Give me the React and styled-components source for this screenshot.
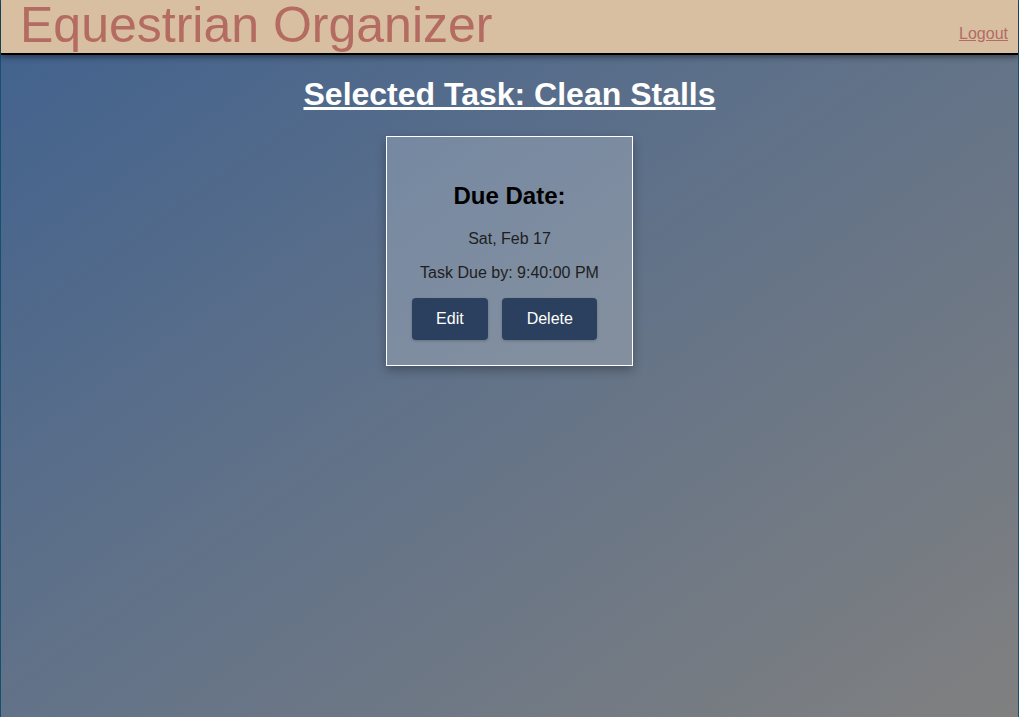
import React from 'react'
import styled, { createGlobalStyle } from 'styled-components'

const GlobalStyle = createGlobalStyle`
  html, body {
    margin: 0;
    padding: 0;
  }

  body {
    font-family: "Liberation Sans", Arial, sans-serif;
  }
`

const Page = styled.div`
  background: linear-gradient(to bottom right, #40618e 0%, #5f7189 45%, #808080 100%);
  border-left: 1px solid #17506e;
  border-right: 1px solid #17506e;
  box-sizing: border-box;
  min-height: 100vh;
`

const Header = styled.header`
  align-items: flex-start;
  background: #d8bfa2;
  border-bottom: 2px solid #000;
  box-shadow: 0 2px 6px rgba(0, 0, 0, 0.45);
  display: flex;
  height: 53px;
  justify-content: space-between;
  padding: 0 10px 0 19px;
  position: relative;
`

const Brand = styled.h1`
  color: #b36b62;
  font-size: 50px;
  font-weight: normal;
  line-height: 51px;
  margin: 0;
`

const Logout = styled.a`
  color: #b36b62;
  cursor: pointer;
  font-size: 16px;
  line-height: 18px;
  margin-top: 25px;
  text-decoration: underline;
`

const Main = styled.main`
  align-items: center;
  display: flex;
  flex-direction: column;
`

const Title = styled.h1`
  color: #fff;
  font-size: 32px;
  font-weight: bold;
  margin: 21px 0 23px;
  text-decoration: underline;
`

const Card = styled.div`
  background: rgba(255, 255, 255, 0.2);
  border: 1px solid #fff;
  box-shadow: 0 4px 10px rgba(0, 0, 0, 0.3);
  padding: 25px;
  text-align: center;
`

const DueHeading = styled.h2`
  color: #000;
  font-size: 24px;
  margin: 20px 0;
`

const Detail = styled.p`
  color: #1e1e1e;
  font-size: 16px;
  margin: 16px 0;
`

const Actions = styled.div`
  display: flex;
  gap: 4px;
`

const Button = styled.button`
  background: #2a405e;
  border: none;
  border-radius: 4px;
  box-shadow: 0 1px 3px rgba(0, 0, 0, 0.2);
  color: #fff;
  cursor: pointer;
  font-family: "Liberation Sans", Arial, sans-serif;
  font-size: 16px;
  height: 42px;
  margin-right: 10px;
  padding: 0 24.5px;
`

const App = () => {
  const task = { name: 'Clean Stalls', date: 'Sat, Feb 17', time: '9:40:00 PM' }

  return (
    <>
      <GlobalStyle />
      <Page>
        <Header>
          <Brand>Equestrian Organizer</Brand>
          <Logout>Logout</Logout>
        </Header>
        <Main>
          <Title>Selected Task: {task.name}</Title>
          <Card>
            <DueHeading>Due Date:</DueHeading>
            <Detail>{task.date}</Detail>
            <Detail>Task Due by: {task.time}</Detail>
            <Actions>
              <Button>Edit</Button>
              <Button>Delete</Button>
            </Actions>
          </Card>
        </Main>
      </Page>
    </>
  )
}

export default App
